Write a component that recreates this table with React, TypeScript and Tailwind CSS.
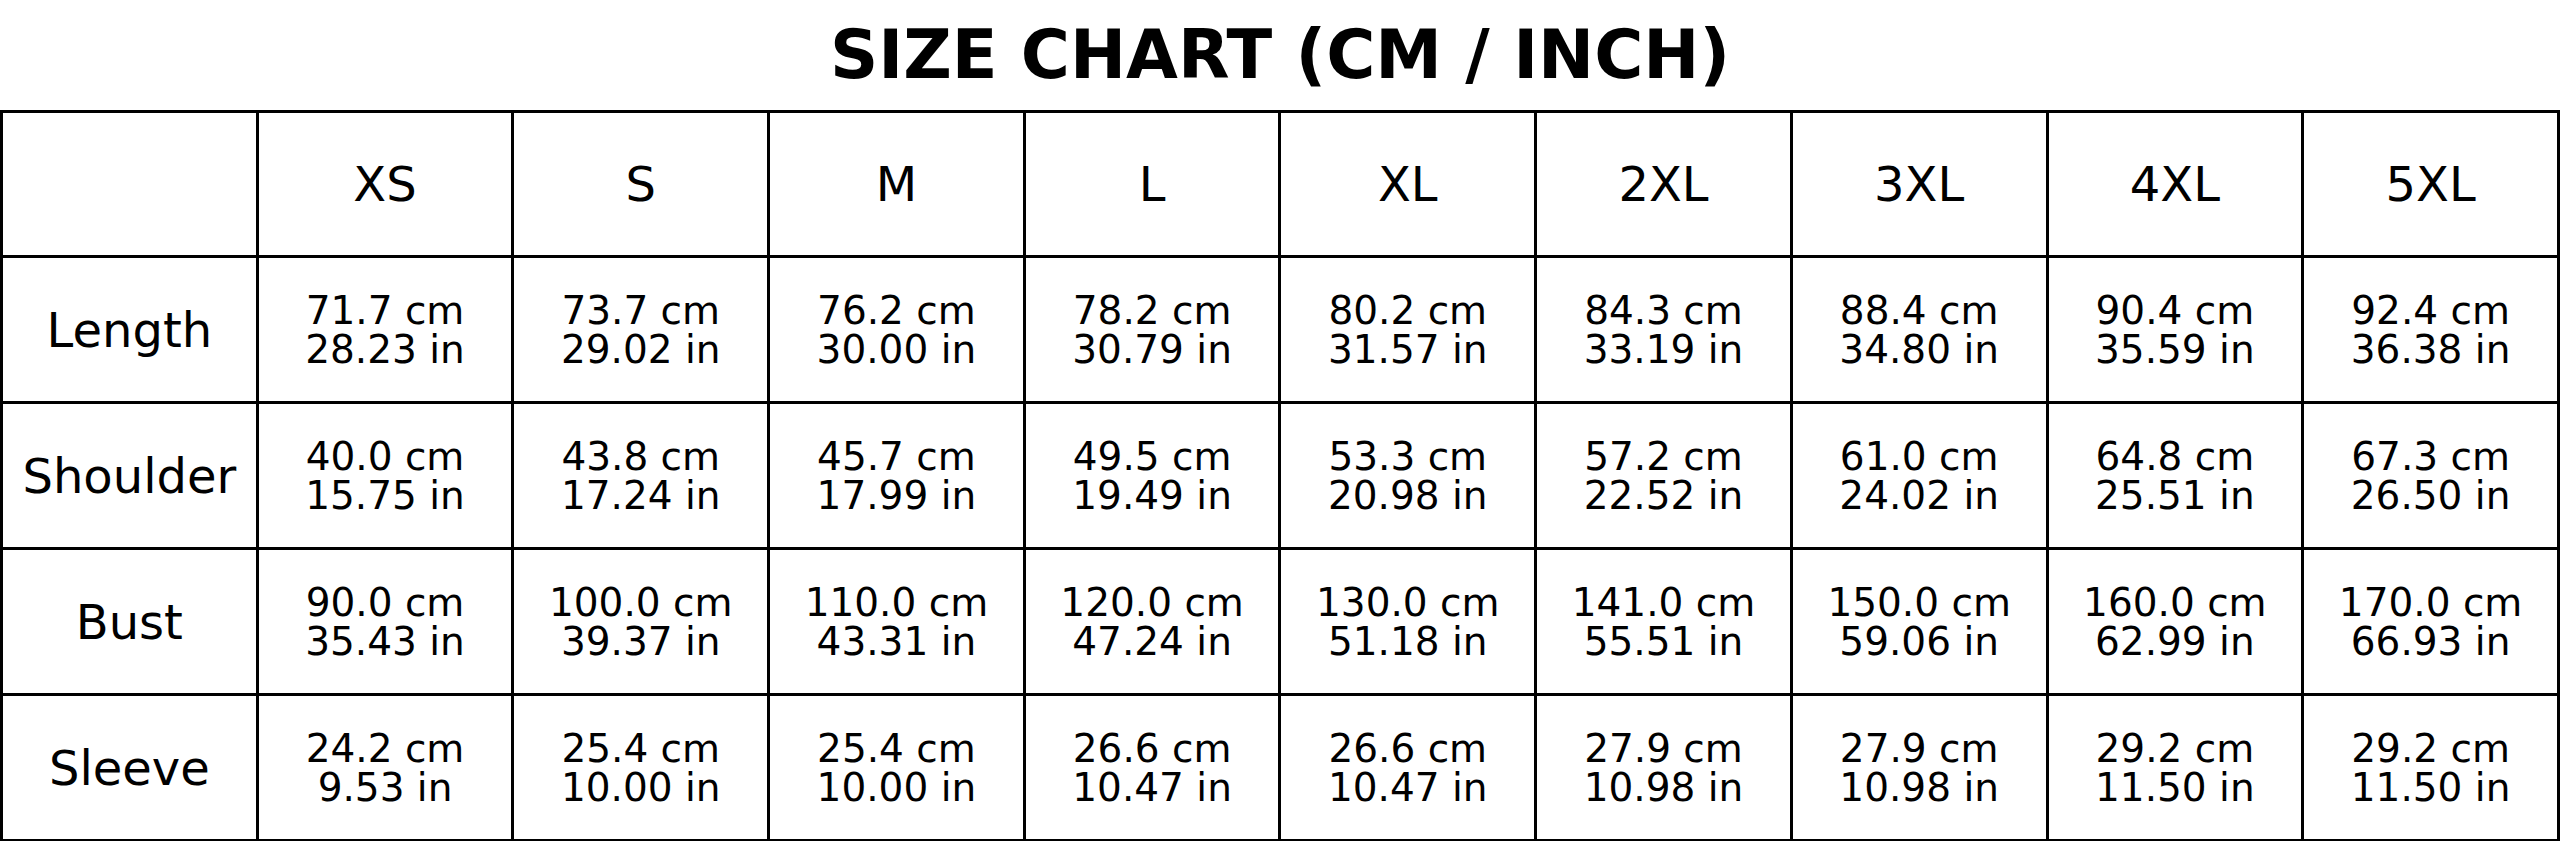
import React from "react";

const sizes = ["XS", "S", "M", "L", "XL", "2XL", "3XL", "4XL", "5XL"];

const rows: { label: string; cm: string[]; inch: string[] }[] = [
  {
    label: "Length",
    cm: ["71.7", "73.7", "76.2", "78.2", "80.2", "84.3", "88.4", "90.4", "92.4"],
    inch: ["28.23", "29.02", "30.00", "30.79", "31.57", "33.19", "34.80", "35.59", "36.38"],
  },
  {
    label: "Shoulder",
    cm: ["40.0", "43.8", "45.7", "49.5", "53.3", "57.2", "61.0", "64.8", "67.3"],
    inch: ["15.75", "17.24", "17.99", "19.49", "20.98", "22.52", "24.02", "25.51", "26.50"],
  },
  {
    label: "Bust",
    cm: ["90.0", "100.0", "110.0", "120.0", "130.0", "141.0", "150.0", "160.0", "170.0"],
    inch: ["35.43", "39.37", "43.31", "47.24", "51.18", "55.51", "59.06", "62.99", "66.93"],
  },
  {
    label: "Sleeve",
    cm: ["24.2", "25.4", "25.4", "26.6", "26.6", "27.9", "27.9", "29.2", "29.2"],
    inch: ["9.53", "10.00", "10.00", "10.47", "10.47", "10.98", "10.98", "11.50", "11.50"],
  },
];

export default function App() {
  return (
    <div
      className="w-[2560px] h-[841px] bg-white text-black overflow-hidden"
      style={{ fontFamily: '"DejaVu Sans", Verdana, sans-serif' }}
    >
      <div className="h-[110px] flex items-center justify-center">
        <h1 className="text-[67px] font-bold leading-none">SIZE CHART (CM / INCH)</h1>
      </div>
      <table className="w-full table-fixed border-collapse">
        <tbody>
          <tr className="h-[145px]">
            <td className="border-[3px] border-black"></td>
            {sizes.map((s) => (
              <td key={s} className="border-[3px] border-black text-center text-[48px] align-middle">
                {s}
              </td>
            ))}
          </tr>
          {rows.map((r) => (
            <tr key={r.label} className="h-[146px]">
              <td className="border-[3px] border-black text-center text-[48px] align-middle">{r.label}</td>
              {r.cm.map((c, i) => (
                <td key={i} className="border-[3px] border-black text-center align-middle">
                  <div className="text-[39px] leading-[39px]">
                    <div>{c} cm</div>
                    <div>{r.inch[i]} in</div>
                  </div>
                </td>
              ))}
            </tr>
          ))}
        </tbody>
      </table>
    </div>
  );
}
